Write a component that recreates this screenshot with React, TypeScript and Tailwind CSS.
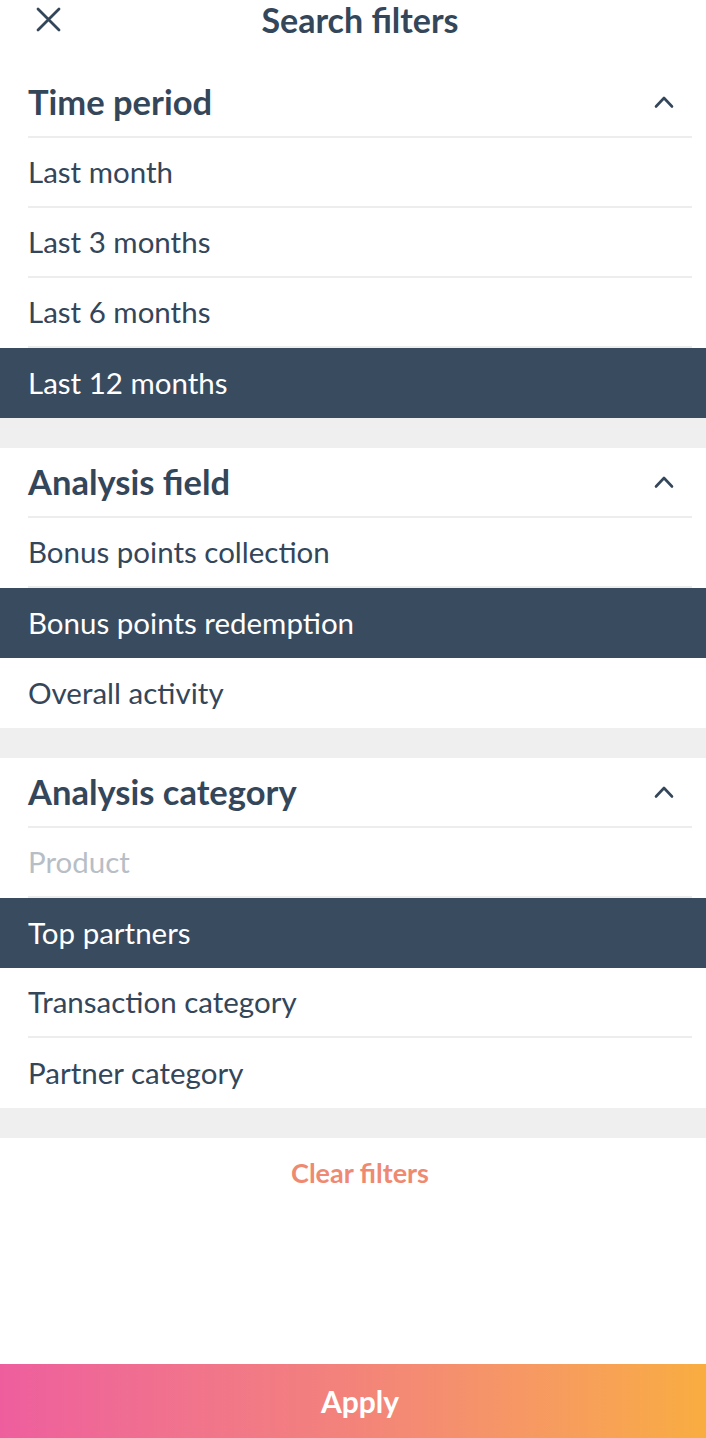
import React from "react";

type Item = { label: string; selected?: boolean; disabled?: boolean };

const sections: { title: string; items: Item[] }[] = [
  {
    title: "Time period",
    items: [
      { label: "Last month" },
      { label: "Last 3 months" },
      { label: "Last 6 months" },
      { label: "Last 12 months", selected: true },
    ],
  },
  {
    title: "Analysis field",
    items: [
      { label: "Bonus points collection" },
      { label: "Bonus points redemption", selected: true },
      { label: "Overall activity" },
    ],
  },
  {
    title: "Analysis category",
    items: [
      { label: "Product", disabled: true },
      { label: "Top partners", selected: true },
      { label: "Transaction category" },
      { label: "Partner category" },
    ],
  },
];

function Chevron() {
  return (
    <svg width="20" height="14" viewBox="0 0 20 14" fill="none" stroke="#34465a" strokeWidth="2.6" strokeLinecap="round" strokeLinejoin="round">
      <path d="M2 11.5 L10 3 L18 11.5" />
    </svg>
  );
}

function Section({ title, items }: { title: string; items: Item[] }) {
  return (
    <div className="bg-white">
      <div className="ml-[28px] mr-[14px] h-[70px] flex items-center justify-between border-b-2 border-[#ededed]">
        <span className="text-[34.5px] font-bold text-[#34465a]">{title}</span>
        <span className="mr-[18px] flex items-center"><Chevron /></span>
      </div>
      {items.map((it, i) => {
        const last = i === items.length - 1;
        if (it.selected) {
          return (
            <div key={it.label} className="h-[70px] flex items-center bg-[#394b5f] px-[28px] text-white text-[29.5px]">
              {it.label}
            </div>
          );
        }
        return (
          <div key={it.label} className={`ml-[28px] mr-[14px] h-[70px] flex items-center text-[29.5px] ${last ? "" : "border-b-2 border-[#ededed]"} ${it.disabled ? "text-[#b8bec6]" : "text-[#34465a]"}`}>
            <span>{it.label}</span>
          </div>
        );
      })}
    </div>
  );
}

export default function App() {
  return (
    <div className="w-[706px] h-[1438px] bg-white flex flex-col" style={{ fontFamily: "Lato, 'Noto Sans', sans-serif" }}>
      <div className="relative h-[68px] flex justify-center pl-[14px]">
        <div className="absolute left-[36px] top-[7px]">
          <svg width="25" height="25" viewBox="0 0 25 25" fill="none" stroke="#34465a" strokeWidth="2.8" strokeLinecap="round">
            <path d="M2 2 L23 23 M23 2 L2 23" />
          </svg>
        </div>
        <span className="text-[34px] font-bold text-[#34465a] leading-[39px]">Search filters</span>
      </div>
      {sections.map((s) => (
        <React.Fragment key={s.title}>
          <Section title={s.title} items={s.items} />
          <div className="h-[30px] bg-[#efefef]" />
        </React.Fragment>
      ))}
      <div className="h-[70px] flex items-center justify-center pl-[14px]">
        <span className="text-[27px] font-bold text-[#ef8a72]">Clear filters</span>
      </div>
      <div className="flex-1" />
      <div className="h-[74px] flex items-center justify-center pl-[14px] bg-gradient-to-r from-[#ee5e9e] via-[#f3837a] to-[#f9ad3f]">
        <span className="text-[30px] font-bold text-white">Apply</span>
      </div>
    </div>
  );
}
